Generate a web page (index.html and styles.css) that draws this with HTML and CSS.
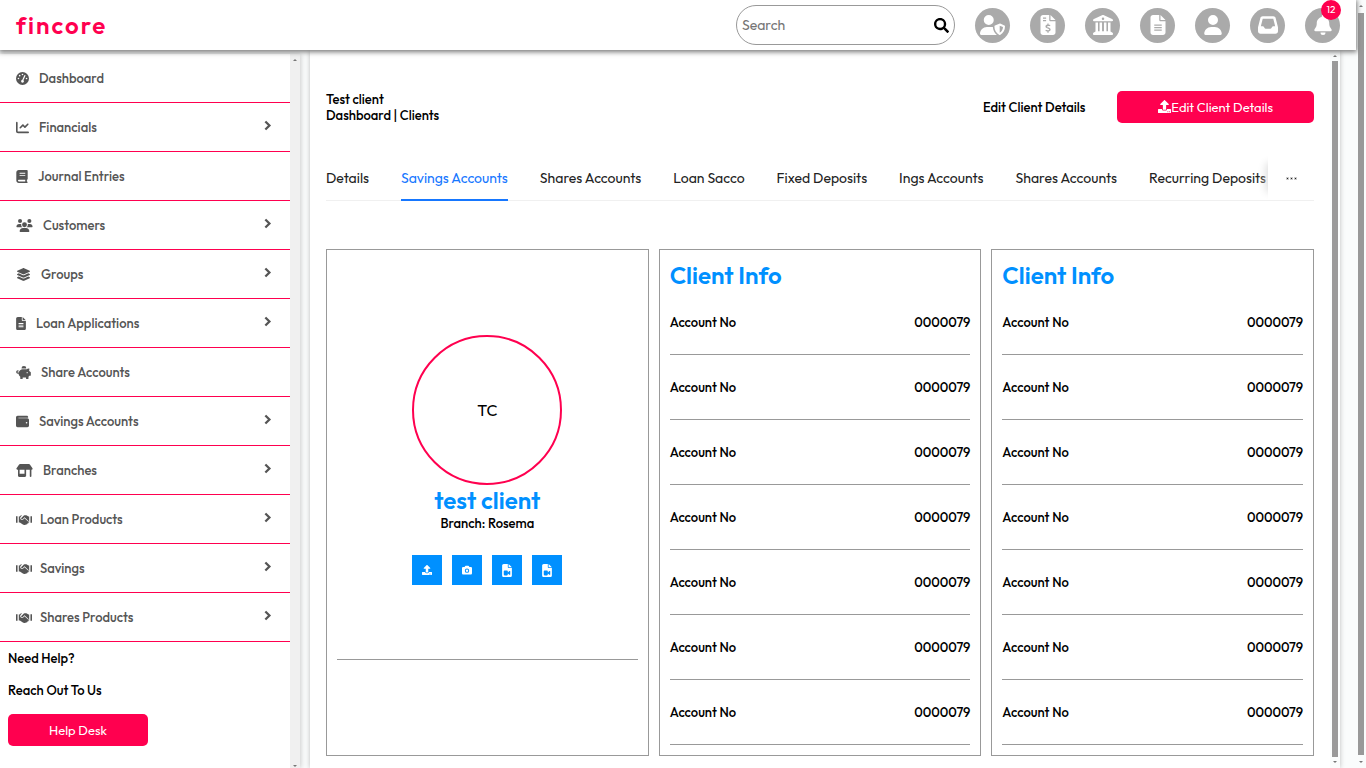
FILE: index.html
```html
<!DOCTYPE html>
<html lang="en">
<head>
<meta charset="utf-8">
<title>fincore</title>
<link rel="stylesheet" href="styles.css">
</head>
<body>
<svg class="sprite" aria-hidden="true">
  <symbol id="i-user" viewBox="0 0 448 512"><path d="M224 256a128 128 0 1 0 0-256 128 128 0 1 0 0 256zM178 304C80 304 0 384 0 482c0 17 13 30 30 30h388c17 0 30-13 30-30 0-98-80-178-178-178z"/></symbol>
  <symbol id="i-shield" viewBox="0 0 640 512"><path d="M224 256a128 128 0 1 0 0-256 128 128 0 1 0 0 256zM178 304C80 304 0 384 0 482c0 17 13 30 30 30h401c-50-41-98-110-102-203zM509 219l-125 50c-9 4-15 12-15 21 0 98 39 176 126 219 6 3 13 3 19 0 87-43 126-121 126-219 0-9-6-17-15-21l-110-50zM504 273l85 36c-4 65-30 114-85 146z" fill-rule="evenodd"/></symbol>
  <symbol id="i-invoice" viewBox="0 0 384 512"><path fill-rule="evenodd" d="M64 0C29 0 0 29 0 64v384c0 35 29 64 64 64h256c35 0 64-29 64-64V160H256c-18 0-32-14-32-32V0zM256 0v128h128zM64 64h80v32H64zM64 128h80v32H64zM176 216h32v32c16 1 32 4 44 8l-8 31c-24-6-64-12-72 7-8 24 28 26 50 34 30 11 41 31 36 55-5 22-24 36-50 40v33h-32v-33c-19-2-38-8-50-13l10-31c20 8 48 15 70 10 19-5 22-24 4-33-30-15-85-17-84-67 0-24 21-41 50-47z"/></symbol>
  <symbol id="i-bank" viewBox="0 0 512 512"><path fill-rule="evenodd" d="M244 3 24 103C9 110 0 120 0 136c0 14 10 24 24 24h464c14 0 24-10 24-24 0-16-9-26-24-33L268 3c-8-4-16-4-24 0zM256 64a32 32 0 1 1 0 64 32 32 0 1 1 0-64zM64 192h64v224h40V192h64v224h48V192h64v224h40V192h64v228l53 36c9 6 11 15 11 24 0 18-10 32-28 32H28c-18 0-28-14-28-32 0-9 2-18 11-24l53-36z"/></symbol>
  <symbol id="i-file" viewBox="0 0 384 512"><path fill-rule="evenodd" d="M64 0C29 0 0 29 0 64v384c0 35 29 64 64 64h256c35 0 64-29 64-64V160H256c-18 0-32-14-32-32V0zM256 0v128h128zM96 240h192v32H96zM96 304h192v32H96zM96 368h192v32H96z"/></symbol>
  <symbol id="i-inbox" viewBox="0 0 512 512"><path fill-rule="evenodd" d="M121 32C92 32 66 52 59 80L2 308c-1 5-2 11-2 16v92c0 35 29 64 64 64h384c35 0 64-29 64-64v-92c0-5-1-11-2-16L453 80c-7-28-33-48-62-48zM121 96h270l48 192h-51c-12 0-23 7-29 18l-14 28c-5 11-17 18-29 18H196c-12 0-24-7-29-18l-14-28c-6-11-17-18-29-18H73z"/></symbol>
  <symbol id="i-bell" viewBox="0 0 448 512"><path d="M224 0c-18 0-32 14-32 32v19C119 66 64 131 64 208v19c0 47-17 92-48 127l-8 9c-8 9-10 23-5 34s16 19 29 19h384c13 0 24-8 29-19s3-25-5-34l-8-9c-31-35-48-80-48-127v-19c0-77-55-142-128-157V32c0-18-14-32-32-32zM288 448H160a64 64 0 0 0 128 0z"/></symbol>
  <symbol id="i-search" viewBox="0 0 512 512"><path fill-rule="evenodd" d="M505 443 405 343c-4-4-10-7-17-7h-16c28-35 44-80 44-128C416 93 323 0 208 0S0 93 0 208s93 208 208 208c48 0 93-16 128-44v16c0 7 3 13 7 17l100 100c9 9 24 9 34 0l28-28c9-9 9-25 0-34zM208 336a128 128 0 1 1 0-256 128 128 0 1 1 0 256z"/></symbol>
  <symbol id="i-gauge" viewBox="0 0 512 512"><path fill-rule="evenodd" d="M256 0a256 256 0 1 0 0 512 256 256 0 1 0 0-512zM256 64a32 32 0 1 1 0 64 32 32 0 1 1 0-64zM144 112a32 32 0 1 1 0 64 32 32 0 1 1 0-64zM96 224a32 32 0 1 1 0 64 32 32 0 1 1 0-64zM416 224a32 32 0 1 1 0 64 32 32 0 1 1 0-64zM324 136c6-14 20-22 34-16 13 6 17 20 11 33l-76 174c24 27 24 53 5 76-25 27-64 24-84 0-27-34-6-87 35-95z"/></symbol>
  <symbol id="i-chart" viewBox="0 0 512 512"><path d="M32 32c18 0 32 14 32 32v336c0 9 7 16 16 16h400c18 0 32 14 32 32s-14 32-32 32H80c-44 0-80-36-80-80V64c0-18 14-32 32-32zM487 151 375 263c-13 12-33 12-46 0l-57-58-82 83c-13 12-33 12-45 0s-13-33 0-45l104-105c13-12 33-12 46 0l57 58 89-90c13-12 33-12 46 0s12 33 0 45z"/></symbol>
  <symbol id="i-book" viewBox="0 0 448 512"><path fill-rule="evenodd" d="M96 0C43 0 0 43 0 96v320c0 53 43 96 96 96h320c18 0 32-14 32-32s-14-32-32-32v-64c18 0 32-14 32-32V32c0-18-14-32-32-32zM96 384h256v64H96c-18 0-32-14-32-32s14-32 32-32zM128 112h224v34H128zM128 192h224v34H128z"/></symbol>
  <symbol id="i-users" viewBox="0 0 640 512"><path d="M144 0a80 80 0 1 1 0 160 80 80 0 1 1 0-160zM512 0a80 80 0 1 1 0 160 80 80 0 1 1 0-160zM0 299c0-59 48-107 107-107h42c16 0 31 4 45 10-8 48 8 88 41 118H21c-12 0-21-10-21-21zM405 320c34-30 50-70 42-118 14-6 29-10 44-10h43c59 0 106 48 106 107 0 11-9 21-21 21zM320 128a96 96 0 1 1 0 192 96 96 0 1 1 0-192zM128 485c0-73 60-133 133-133h118c73 0 133 60 133 133 0 15-12 27-27 27H155c-15 0-27-12-27-27z"/></symbol>
  <symbol id="i-layers" viewBox="0 0 512 512"><path d="M12 148 232 249c15 7 33 7 48 0l220-101c16-7 16-33 0-40L280 7c-15-7-33-7-48 0L12 108c-16 7-16 33 0 40zM500 236l-55-25-145 67c-28 13-60 13-88 0L67 211l-55 25c-16 7-16 33 0 40l220 101c15 7 33 7 48 0l220-101c16-7 16-33 0-40zM500 364l-55-25-145 67c-28 13-60 13-88 0L67 339l-55 25c-16 7-16 33 0 40l220 101c15 7 33 7 48 0l220-101c16-7 16-33 0-40z"/></symbol>
  <symbol id="i-piggy" viewBox="0 0 576 512"><path fill-rule="evenodd" d="M400 96v1c-5-1-11-1-16-1H256c-17 0-33 2-48 6V96a96 96 0 1 1 192 0zM384 128c10 0 20 1 30 3 17-21 44-35 74-35h20c10 0 18 10 15 20l-16 65c14 14 25 29 33 47h12c13 0 24 11 24 24v112c0 13-11 24-24 24h-36c-9 12-20 23-32 32v68c0 13-11 24-24 24h-48c-13 0-24-11-24-24v-40H256v40c0 13-11 24-24 24h-48c-13 0-24-11-24-24v-68c-36-27-60-68-64-116H68c-38 0-68-30-68-68 0-37 29-67 65-67 20 0 36 16 32 33-3 13-14 18-27 17-12 0-22 8-22 18 0 12 9 19 20 19h33c15-76 81-128 155-128zM432 240a24 24 0 1 0 0 48 24 24 0 1 0 0-48z"/></symbol>
  <symbol id="i-wallet" viewBox="0 0 512 512"><path fill-rule="evenodd" d="M64 32C29 32 0 61 0 96v320c0 35 29 64 64 64h384c35 0 64-29 64-64V192c0-35-29-64-64-64H96v-24h368c10 0 16-6 16-16 0-32-25-56-56-56zM416 272a32 32 0 1 1 0 64 32 32 0 1 1 0-64z"/></symbol>
  <symbol id="i-store" viewBox="0 0 640 512"><path fill-rule="evenodd" d="M37 224c-21 0-37-17-37-36 0-7 2-14 6-20L101 26C111 10 129 0 149 0h342c20 0 38 10 48 26l95 142c4 6 6 13 6 20 0 19-16 36-37 36h-11v256c0 18-14 32-32 32s-32-14-32-32V224H384v240c0 27-21 48-48 48H112c-27 0-48-21-48-48V224zM128 224v160h192V224z"/></symbol>
  <symbol id="i-hands" viewBox="0 0 640 512"><path d="M0 128h62v256H0zM578 128h62v256h-62zM112 134h26l50-38 58-6-57 55c-31 30-29 80 4 108 36 30 79 20 108-9l38-36 157 142c16 15 16 38 2 51-12 11-26 11-38 2 9 19-12 46-39 38-5 25-33 39-57 22-21 27-64 20-90-3L154 377H112zM528 134h-25L414 90c-30-12-73-13-98 10L214 194c-12 12-11 30 1 42 18 15 43 10 58-5l67-62 158 144 20 64h10z"/></symbol>
  <symbol id="i-chev" viewBox="0 0 320 512"><path d="m76 96 160 160L76 416" fill="none" stroke="currentColor" stroke-width="90"/></symbol>
  <symbol id="i-upload" viewBox="0 0 512 512"><path fill-rule="evenodd" d="M296 384h-80c-13 0-24-11-24-24V192h-88c-18 0-27-21-14-34L242 6c8-8 20-8 28 0l152 152c13 13 4 34-14 34h-88v168c0 13-11 24-24 24zM512 376v112c0 13-11 24-24 24H24c-13 0-24-11-24-24V376c0-13 11-24 24-24h136v8c0 31 25 56 56 56h80c31 0 56-25 56-56v-8h136c13 0 24 11 24 24zM388 440a20 20 0 1 0 0 40 20 20 0 1 0 0-40zM448 440a20 20 0 1 0 0 40 20 20 0 1 0 0-40z"/></symbol>
  <symbol id="i-camera" viewBox="0 0 512 512"><path fill-rule="evenodd" d="m149 65-10 31H64c-35 0-64 29-64 64v256c0 35 29 64 64 64h384c35 0 64-29 64-64V160c0-35-29-64-64-64h-75l-10-31c-7-20-25-33-46-33H195c-21 0-39 13-46 33zM256 176a112 112 0 1 1 0 224 112 112 0 1 1 0-224zM256 228a60 60 0 1 0 0 120 60 60 0 1 0 0-120z"/></symbol>
  <symbol id="i-video" viewBox="0 0 384 512"><path fill-rule="evenodd" d="M64 0C29 0 0 29 0 64v384c0 35 29 64 64 64h256c35 0 64-29 64-64V160H256c-18 0-32-14-32-32V0zM256 0v128h128zM64 288c0-18 14-32 32-32h96c18 0 32 14 32 32v44l62-52c13-10 34-4 34 12v120c0 16-21 22-34 12l-62-52v44c0 18-14 32-32 32H96c-18 0-32-14-32-32z"/></symbol>
</svg>

<div class="page">
  <header class="topbar">
    <a class="brand" href="#">fincore</a>
    <form class="search">
      <input class="search-input" type="search" placeholder="Search" aria-label="Search">
      <button class="search-button" type="button" aria-label="Search"><svg class="icon-search"><use href="#i-search"/></svg></button>
    </form>
    <nav class="shortcuts" aria-label="Shortcuts">
      <button class="round" aria-label="Roles"><svg class="w-wide"><use href="#i-shield"/></svg></button>
      <button class="round" aria-label="Invoices"><svg><use href="#i-invoice"/></svg></button>
      <button class="round" aria-label="Bank"><svg><use href="#i-bank"/></svg></button>
      <button class="round" aria-label="Reports"><svg><use href="#i-file"/></svg></button>
      <button class="round" aria-label="Profile"><svg><use href="#i-user"/></svg></button>
      <button class="round" aria-label="Inbox"><svg><use href="#i-inbox"/></svg></button>
      <button class="round" aria-label="Notifications"><svg><use href="#i-bell"/></svg><span class="badge">12</span></button>
    </nav>
  </header>

  <div class="content">
    <aside class="sidebar">
      <div class="sidebar-body">
        <nav class="menu" aria-label="Main">
          <a class="item" href="#"><svg class="w13"><use href="#i-gauge"/></svg><span>Dashboard</span></a>
          <a class="item" href="#"><svg class="w13"><use href="#i-chart"/></svg><span>Financials</span><svg class="chev"><use href="#i-chev"/></svg></a>
          <a class="item" href="#"><svg class="w12"><use href="#i-book"/></svg><span>Journal Entries</span></a>
          <a class="item" href="#"><svg class="w17"><use href="#i-users"/></svg><span>Customers</span><svg class="chev"><use href="#i-chev"/></svg></a>
          <a class="item" href="#"><svg class="w15"><use href="#i-layers"/></svg><span>Groups</span><svg class="chev"><use href="#i-chev"/></svg></a>
          <a class="item" href="#"><svg class="w10"><use href="#i-file"/></svg><span>Loan Applications</span><svg class="chev"><use href="#i-chev"/></svg></a>
          <a class="item" href="#"><svg class="w15"><use href="#i-piggy"/></svg><span>Share Accounts</span></a>
          <a class="item" href="#"><svg class="w13"><use href="#i-wallet"/></svg><span>Savings Accounts</span><svg class="chev"><use href="#i-chev"/></svg></a>
          <a class="item" href="#"><svg class="w17"><use href="#i-store"/></svg><span>Branches</span><svg class="chev"><use href="#i-chev"/></svg></a>
          <a class="item tight" href="#"><svg class="w16"><use href="#i-hands"/></svg><span>Loan Products</span><svg class="chev"><use href="#i-chev"/></svg></a>
          <a class="item tight" href="#"><svg class="w16"><use href="#i-hands"/></svg><span>Savings</span><svg class="chev"><use href="#i-chev"/></svg></a>
          <a class="item tight" href="#"><svg class="w16"><use href="#i-hands"/></svg><span>Shares Products</span><svg class="chev"><use href="#i-chev"/></svg></a>
        </nav>
        <div class="help">
          <p>Need Help?</p>
          <p>Reach Out To Us</p>
          <button class="primary">Help Desk</button>
        </div>
      </div>
      <div class="scrollbar idle" aria-hidden="true"><i class="up"></i><i class="thumb"></i><i class="down"></i></div>
    </aside>

    <main class="main">
      <div class="main-body">
        <div class="heading">
          <div class="crumbs"><p>Test client</p><p>Dashboard | Clients</p></div>
          <span class="action-label">Edit Client Details</span>
          <button class="primary"><svg class="w13"><use href="#i-upload"/></svg>Edit Client Details</button>
        </div>

        <div class="tabbar">
          <div class="tabs" role="tablist">
            <button class="tab" role="tab">Details</button>
            <button class="tab active" role="tab" aria-selected="true">Savings Accounts</button>
            <button class="tab" role="tab">Shares Accounts</button>
            <button class="tab" role="tab">Loan Sacco</button>
            <button class="tab" role="tab">Fixed Deposits</button>
            <button class="tab" role="tab">Ings Accounts</button>
            <button class="tab" role="tab">Shares Accounts</button>
            <button class="tab" role="tab">Recurring Deposits</button>
          </div>
          <button class="more" aria-label="More tabs"><i></i><i></i><i></i></button>
        </div>

        <div class="cards">
          <section class="card profile">
            <div class="avatar">TC</div>
            <h2>test client</h2>
            <p>Branch: Rosema</p>
            <div class="tools">
              <button aria-label="Upload"><svg><use href="#i-upload"/></svg></button>
              <button aria-label="Take photo"><svg><use href="#i-camera"/></svg></button>
              <button aria-label="Video file"><svg class="tall"><use href="#i-video"/></svg></button>
              <button aria-label="Video file"><svg class="tall"><use href="#i-video"/></svg></button>
            </div>
            <hr>
          </section>
          <section class="card">
            <h2>Client Info</h2>
            <dl>
              <div class="row"><dt>Account No</dt><dd>0000079</dd></div>
              <div class="row"><dt>Account No</dt><dd>0000079</dd></div>
              <div class="row"><dt>Account No</dt><dd>0000079</dd></div>
              <div class="row"><dt>Account No</dt><dd>0000079</dd></div>
              <div class="row"><dt>Account No</dt><dd>0000079</dd></div>
              <div class="row"><dt>Account No</dt><dd>0000079</dd></div>
              <div class="row"><dt>Account No</dt><dd>0000079</dd></div>
            </dl>
          </section>
          <section class="card">
            <h2>Client Info</h2>
            <dl>
              <div class="row"><dt>Account No</dt><dd>0000079</dd></div>
              <div class="row"><dt>Account No</dt><dd>0000079</dd></div>
              <div class="row"><dt>Account No</dt><dd>0000079</dd></div>
              <div class="row"><dt>Account No</dt><dd>0000079</dd></div>
              <div class="row"><dt>Account No</dt><dd>0000079</dd></div>
              <div class="row"><dt>Account No</dt><dd>0000079</dd></div>
              <div class="row"><dt>Account No</dt><dd>0000079</dd></div>
            </dl>
          </section>
        </div>
      </div>
      <div class="scrollbar" aria-hidden="true"><i class="up"></i><i class="thumb"></i><i class="down"></i></div>
    </main>
  </div>
</div>
<div class="scrollbar outer" aria-hidden="true"><i class="up"></i><i class="thumb"></i><i class="down"></i></div>
</body>
</html>
```
FILE: styles.css
```css
:root {
  --pink: #ff004f;
  --blue: #0090ff;
  --line: #999;
}
* { box-sizing: border-box; }
body, h2, p, dl, dd { margin: 0; }
body {
  display: flex;
  height: 100vh;
  overflow: hidden;
  background: #fafcfc;
  color: #000;
  font: 500 13px/16px Outfit, Lato, sans-serif;
}
a { color: inherit; text-decoration: none; }
button { margin: 0; padding: 0; border: 0; background: none; color: inherit; font: inherit; cursor: pointer; }
svg { display: block; flex: none; fill: currentColor; }
.sprite { position: absolute; width: 0; height: 0; }

.page { display: flex; flex: 1; flex-direction: column; min-width: 0; }

.topbar {
  display: flex;
  flex: none;
  align-items: center;
  gap: 20px;
  height: 50px;
  padding: 0 16px;
  background: #fff;
  box-shadow: 0 1px 5px 1px #777;
  z-index: 1;
}
.brand { margin-right: auto; color: var(--pink); font-size: 24px; font-weight: 600; line-height: 30px; letter-spacing: 2px; }
.search {
  display: flex;
  align-items: center;
  width: 219px;
  height: 40px;
  padding: 0 5px;
  border: 1px solid var(--line);
  border-radius: 20px;
}
.search-input { flex: 1; min-width: 0; padding: 0; border: 0; outline: 0; background: none; font: 400 14px/20px Outfit, Lato, sans-serif; }
.search-input::placeholder { color: #757575; }
.icon-search { width: 15px; height: 15px; }
.shortcuts { display: flex; gap: 20px; }
.round {
  position: relative;
  display: grid;
  place-items: center;
  width: 35px;
  height: 35px;
  border-radius: 50%;
  background: #aaa;
  color: #fff;
}
.round svg { width: 20px; height: 20px; }
.round .w-wide { width: 25px; }
.badge {
  position: absolute;
  top: -8px;
  right: -1px;
  width: 20px;
  height: 20px;
  border-radius: 50%;
  background: var(--pink);
  font-size: 10px;
  font-weight: 400;
  line-height: 20px;
}

.content { display: flex; flex: 1; gap: 10px; min-height: 0; padding-right: 16px; }
.sidebar { display: flex; flex: none; width: 300px; margin-top: 4px; background: #fff; box-shadow: 1px 0 5px #ccc; }
.sidebar-body { flex: 1; overflow: hidden; }
.item {
  display: flex;
  align-items: center;
  gap: 10px;
  height: 49px;
  padding: 0 18px 0 16px;
  border-bottom: 1px solid var(--pink);
  color: #555;
}
.item.tight { gap: 8px; }
.item svg { height: 13px; }
.item .chev { width: 9px; height: 13px; margin: 0 0 4px auto; }
.w10 { width: 10px; }
.w12 { width: 12px; }
.w13 { width: 13px; height: 13px; }
.w15 { width: 15px; }
.w16 { width: 16px; }
.w17 { width: 17px; }
.help { display: flex; flex-direction: column; align-items: flex-start; gap: 16px; padding: 8px; }
.primary {
  display: flex;
  align-items: center;
  height: 32px;
  padding: 0 41px;
  border-radius: 5px;
  background: var(--pink);
  color: #fff;
  font-weight: 400;
}
.primary svg { margin-bottom: 2px; }

.main { display: flex; flex: 1; min-width: 0; background: #fff; box-shadow: 0 0 5px #bbb; }
.main-body { flex: 1; min-width: 0; padding: 41px 16px 0; overflow: hidden; }
.heading { display: flex; align-items: center; gap: 32px; }
.crumbs { margin-right: auto; }

.tabbar { display: flex; margin-top: 32px; border-bottom: 1px solid #f0f0f0; }
.tabs { display: flex; flex: 1; gap: 32px; min-width: 0; overflow: hidden; margin-bottom: -1px; }
.tab { flex: none; height: 46px; padding-top: 2px; border-bottom: 2px solid transparent; color: #222; font-size: 14px; font-weight: 400; }
.tab.active { border-color: #1677ff; color: #1677ff; }
.more { display: flex; align-items: center; justify-content: center; gap: 3px; width: 46px; padding-top: 1px; box-shadow: -10px 0 8px -8px #ddd; z-index: 1; }
.more i { width: 1px; height: 1px; background: #222; outline: 1px solid #ccc; }

.cards { display: grid; grid-template-columns: repeat(3, 1fr); gap: 10px; margin-top: 48px; }
.card { padding: 10px; border: 1px solid var(--line); }
.card h2 { color: var(--blue); font-size: 24px; font-weight: 600; line-height: 30px; }
.row { display: flex; align-items: center; justify-content: space-between; height: 65px; border-bottom: 1px solid var(--line); }
.profile { display: flex; flex-direction: column; align-items: center; padding-top: 85px; }
.avatar { display: grid; place-items: center; width: 150px; height: 150px; border: 2px solid var(--pink); border-radius: 50%; font-size: 16px; font-weight: 400; }
.tools { display: flex; gap: 10px; margin-top: 24px; }
.tools button { display: grid; place-items: center; width: 30px; height: 30px; background: var(--blue); color: #fff; }
.tools svg { width: 10px; height: 10px; }
.tools .tall { height: 13px; }
.profile hr { align-self: stretch; margin: 74px 0 0; border: 0; border-top: 1px solid var(--line); }

.scrollbar { display: flex; flex: none; flex-direction: column; align-items: center; width: 10px; padding: 5px 0; gap: 4px; background: #fafcfc; }
.scrollbar .thumb { flex: 1; width: 6px; background: var(--line); }
.scrollbar .up { border: 2px solid transparent; border-top: 0; border-bottom-color: #777; }
.scrollbar .down { border: 2px solid transparent; border-bottom: 0; border-top-color: #777; }
.scrollbar.outer { gap: 6px; }
.scrollbar.idle { background: #f0f0f0; padding-bottom: 1px; }
.scrollbar.idle .thumb { background: none; }
```
